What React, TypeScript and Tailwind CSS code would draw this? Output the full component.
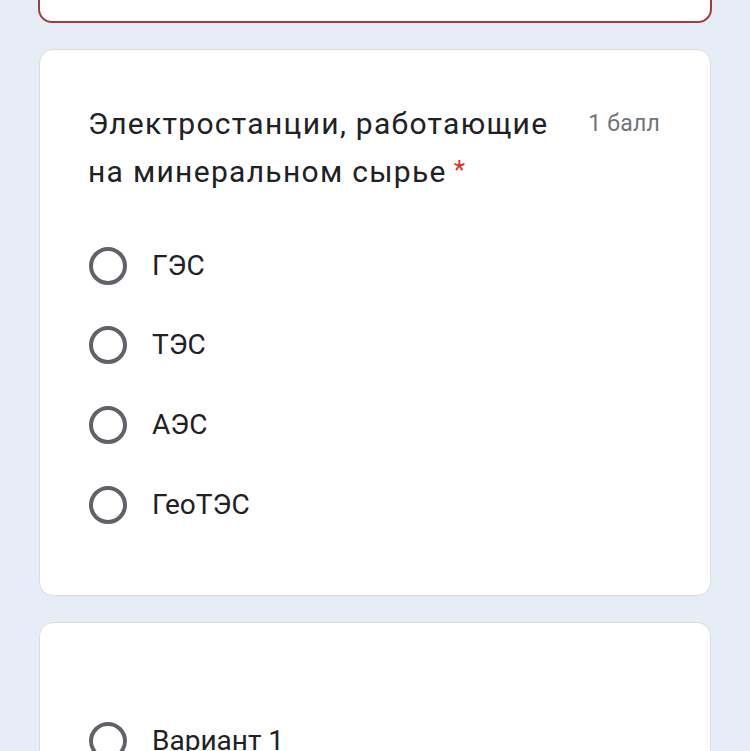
import React from "react";

function Radio() {
  return (
    <div className="w-[38px] h-[38px] rounded-full border-[4px] border-[#5f6368] shrink-0" />
  );
}

const options = ["ГЭС", "ТЭС", "АЭС", "ГеоТЭС"];

export default function App() {
  return (
    <div
      className="w-[750px] h-[751px] overflow-hidden bg-[#e7edf7] relative"
      style={{ fontFamily: "Roboto, 'Noto Sans', sans-serif" }}
    >
      <div className="px-[39px] flex flex-col gap-[26px] -mt-[20px]">
        <div className="h-[43px] bg-white rounded-[14px] border-[2px] border-[#a53c3c] -mx-px" />
        <div className="bg-white rounded-[14px] border border-[#dadce0] pl-[48px] pr-[50px] pt-[50px] pb-[51px]">
          <div className="flex items-start justify-between">
            <div className="w-[484px] text-[30px] leading-[48px] text-[#202124] tracking-[1.3px]">
              Электростанции, работающие на минеральном сырье
              <span className="text-[#d93025] text-[26px] ml-[7px] relative -top-[3px]">*</span>
            </div>
            <div className="text-[23px] leading-[48px] text-[#70757a] tracking-[0.2px] whitespace-nowrap">
              1 балл
            </div>
          </div>
          <div className="flex flex-col mt-[29px] pl-px">
            {options.map((o) => (
              <div key={o} className="h-[79.6px] flex items-center">
                <Radio />
                <span className="ml-[25px] text-[28px] text-[#202124]">{o}</span>
              </div>
            ))}
          </div>
        </div>
        <div className="bg-white rounded-[14px] border border-[#dadce0] pl-[49px] pt-[99px] h-[200px]">
          <div className="flex items-center h-[38px]">
            <Radio />
            <span className="ml-[25px] text-[28px] text-[#202124]">Вариант 1</span>
          </div>
        </div>
      </div>
    </div>
  );
}
